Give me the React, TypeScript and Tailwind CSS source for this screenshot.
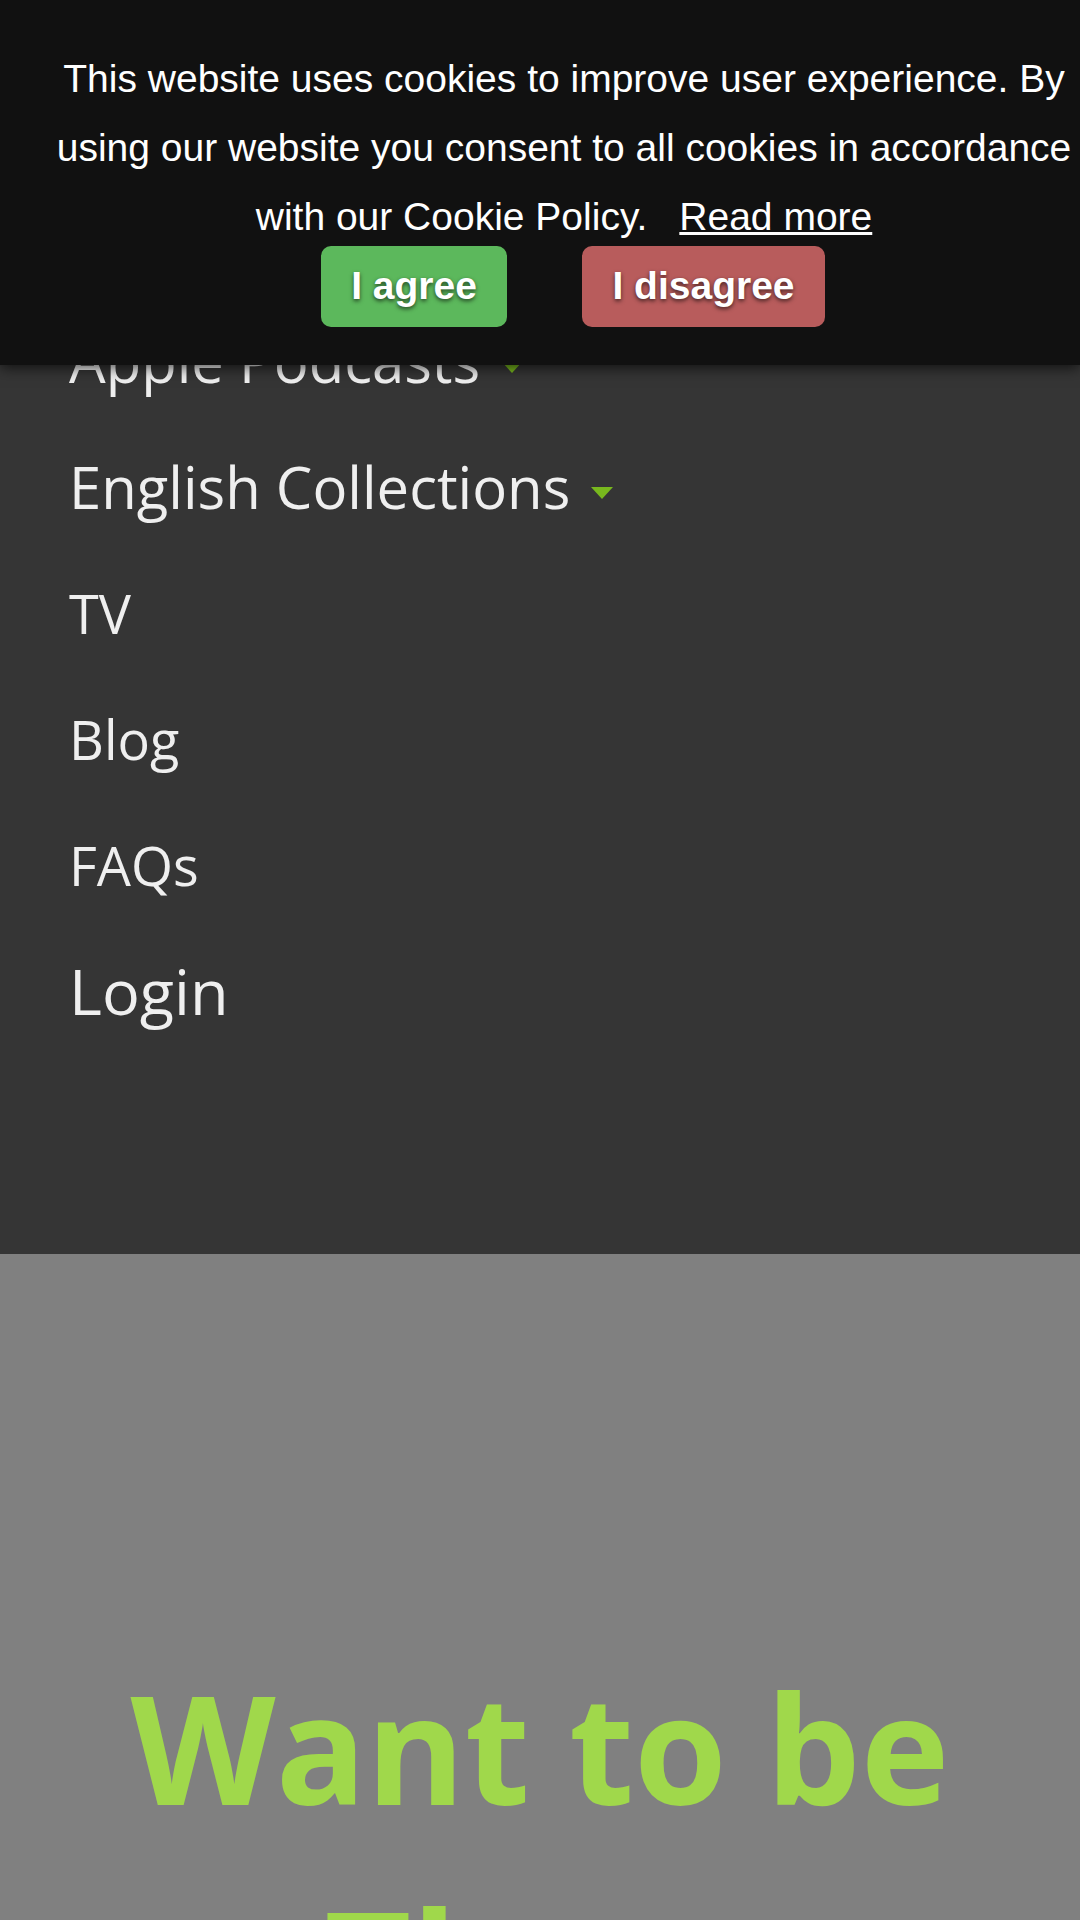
import React from "react";

const MENU = [
  { label: "Apple Podcasts", size: "text-[58px]", drop: true },
  { label: "English Collections", size: "text-[58px]", drop: true },
  { label: "TV", size: "text-[54px]", drop: false },
  { label: "Blog", size: "text-[54px]", drop: false },
  { label: "FAQs", size: "text-[54px]", drop: false },
  { label: "Login", size: "text-[63px]", drop: false },
];

const CookieBar = () => {
  return (
    <div className="absolute inset-x-0 top-0 h-[365px] bg-[#111111] pt-[44px] pl-[48px] shadow-[0_2px_14px_rgba(0,0,0,0.75)] font-['Liberation_Sans',Arial,sans-serif] text-white">
      <p className="text-center text-[39px] leading-[69px]">
        This website uses cookies to improve user experience. By using our website you consent to all
        cookies in accordance with our Cookie Policy.
        <a href="#" className="ml-[32px] underline">
          Read more
        </a>
      </p>
      {/* buttons sit a touch into the last text line */}
      <div className="-mt-[5px] flex justify-center gap-[75px] pl-[18px]">
        <button className="h-[81px] w-[186px] rounded-[10px] bg-[#5cb85c] text-[39px] font-bold text-white [text-shadow:0_2px_4px_rgba(0,0,0,0.65)]">
          I agree
        </button>
        <button className="h-[81px] w-[243px] rounded-[10px] bg-[#b85c5c] text-[39px] font-bold text-white [text-shadow:0_2px_4px_rgba(0,0,0,0.65)]">
          I disagree
        </button>
      </div>
    </div>
  );
};

export default function App() {
  return (
    <div className="relative w-[1080px] font-['Open_Sans',sans-serif]">
      {/* Mobile menu */}
      <nav className="bg-[#353535] pt-[298px] pb-[200px] pl-[69px]">
        <ul>
          {MENU.map((m) => (
            <li key={m.label} className={`h-[126px] whitespace-nowrap leading-[126px] text-[#efefef] ${m.size}`}>
              {m.label}
              {m.drop && (
                <span className="ml-[21px] inline-block h-0 w-0 border-x-[11px] border-t-[12px] border-x-transparent border-t-[#78b81e] align-middle" />
              )}
            </li>
          ))}
        </ul>
      </nav>

      {/* Hero */}
      <section className="bg-[#808080] pt-[385px] pb-[120px] text-center">
        <h2 className="text-[150px] font-bold leading-[216px] text-[#a0d84b]">Want to be There</h2>
      </section>

      <CookieBar />
    </div>
  );
}
